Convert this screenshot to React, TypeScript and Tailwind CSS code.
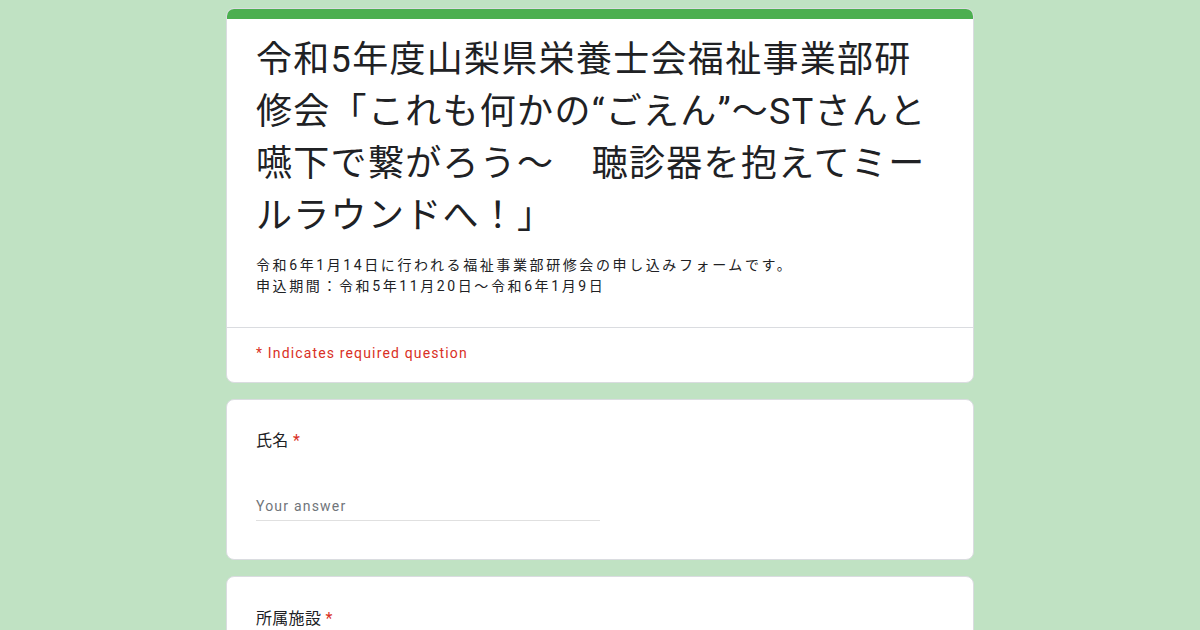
export default function App() {
  const font = "font-['Roboto','Noto_Sans_CJK_JP',sans-serif]";
  return (
    <main className={`min-h-screen bg-[#c0e2c3] flex justify-center ${font}`}>
      <div className="w-[748px] pt-2 flex flex-col gap-4">
        <div className="bg-white rounded-lg border border-[#dadce0] overflow-hidden">
          <div className="h-[10px] bg-[#4caf50]" />
          <div className="px-[29px] pt-[15px] pb-[30px]">
            <h1 className="text-[36px] leading-[52px] tracking-[1.3px] whitespace-nowrap text-[#202124]">
              令和5年度山梨県栄養士会福祉事業部研
              <br />
              修会「これも何かの“ごえん”〜STさんと
              <br />
              嚥下で繋がろう〜　聴診器を抱えてミー
              <br />
              ルラウンドへ！」
            </h1>
            <p className="mt-[13px] text-[14px] leading-[21px] tracking-[2.6px] text-[#202124]">
              令和6年1月14日に行われる福祉事業部研修会の申し込みフォームです。
              <br />
              申込期間：令和5年11月20日〜令和6年1月9日
            </p>
          </div>
          <div className="border-t border-[#dadce0] px-[29px] pt-[15px] pb-[19px]">
            <p className="text-[14px] leading-[20px] tracking-[1.15px] text-[#d93025]">* Indicates required question</p>
          </div>
        </div>

        <div className="bg-white rounded-lg border border-[#dadce0] px-[29px] pt-[29px] pb-[38px]">
          <p className="text-[16px] leading-[24px] tracking-[0.3px] text-[#202124]">
            氏名 <span className="text-[#d93025]">*</span>
          </p>
          <div className="mt-[41px] w-[344px] border-b border-[#e0e0e0] pb-[2px]">
            <span className="text-[14px] leading-[20px] tracking-[1.2px] text-[#70757a]">Your answer</span>
          </div>
        </div>

        <div className="bg-white rounded-lg border border-[#dadce0] px-[29px] pt-[30px] pb-[60px]">
          <p className="text-[16px] leading-[24px] tracking-[0.3px] text-[#202124]">
            所属施設 <span className="text-[#d93025]">*</span>
          </p>
        </div>
      </div>
    </main>
  );
}
